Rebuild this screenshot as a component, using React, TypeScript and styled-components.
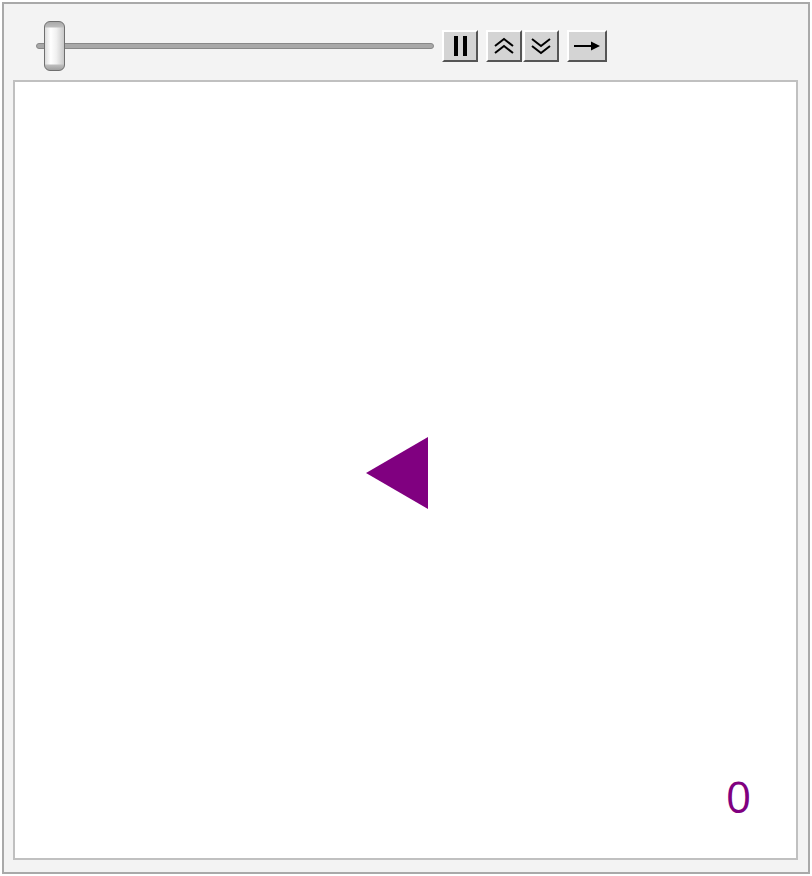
import React from "react";
import styled, { createGlobalStyle } from "styled-components";

const Global = createGlobalStyle`
  html, body { margin: 0; padding: 0; background: #ffffff; }
  body { font-family: "Open Sans", "DejaVu Sans", sans-serif; }
`;

const Frame = styled.div`
  box-sizing: border-box;
  margin: 2px 0 0 2px;
  width: 808px;
  height: 872px;
  border: 2px solid #a9a9a9;
  background: #f3f3f3;
  display: flex;
  flex-direction: column;
  padding: 0 10px 12px 9px;
`;

const Toolbar = styled.div`
  box-sizing: border-box;
  height: 76px;
  padding: 7px 0 0 23px;
  display: flex;
  align-items: center;
`;

const Slider = styled.div`
  position: relative;
  width: 398px;
  height: 50px;
  display: flex;
  align-items: center;
`;

const Track = styled.div`
  box-sizing: border-box;
  width: 100%;
  height: 6px;
  border-radius: 3px;
  background: #a8a8a8;
  border: 1px solid #888888;
`;

const Thumb = styled.div`
  position: absolute;
  left: 8px;
  top: 0;
  box-sizing: border-box;
  width: 21px;
  height: 50px;
  border: 1px solid #6f6f6f;
  border-radius: 6px;
  background: linear-gradient(
    to bottom,
    #a9a9a9 0px,
    #bdbdbd 5px,
    transparent 6px,
    transparent 42px,
    #bdbdbd 43px,
    #a0a0a0 100%
  ),
  linear-gradient(to right, #dcdcdc 0%, #ffffff 30%, #f0f0f0 60%, #c8c8c8 100%);
`;

const Button = styled.div<{ $gapLeft: number }>`
  box-sizing: border-box;
  margin-left: ${(p) => p.$gapLeft}px;
  width: 36px;
  height: 32px;
  background: #d4d4d4;
  border-top: 2px solid #ffffff;
  border-left: 2px solid #ffffff;
  border-right: 2px solid #555555;
  border-bottom: 2px solid #555555;
  display: flex;
  align-items: center;
  justify-content: center;
`;

const WideButton = styled(Button)`
  width: 40px;
`;

const Panel = styled.div`
  position: relative;
  flex: 1;
  box-sizing: border-box;
  border: 2px solid #c0c0c0;
  background: #ffffff;
`;

const Pointer = styled.svg`
  position: absolute;
  left: 351px;
  top: 355px;
`;

const Counter = styled.span`
  position: absolute;
  left: 711px;
  top: 692px;
  font-family: "Open Sans", sans-serif;
  font-size: 44px;
  line-height: 1;
  color: #800080;
`;

export default function App() {
  return (
    <>
      <Global />
      <Frame>
        <Toolbar>
          <Slider>
            <Track />
            <Thumb />
          </Slider>
          <Button $gapLeft={8}>
            <svg width="16" height="20" viewBox="0 0 16 20">
              <rect x="2" y="0" width="4" height="20" fill="#000" />
              <rect x="11" y="0" width="4" height="20" fill="#000" />
            </svg>
          </Button>
          <Button $gapLeft={8}>
            <svg width="22" height="18" viewBox="0 0 22 18">
              <polyline points="2,9 11,2 20,9" fill="none" stroke="#000" strokeWidth="2" />
              <polyline points="2,16 11,9 20,16" fill="none" stroke="#000" strokeWidth="2" />
            </svg>
          </Button>
          <Button $gapLeft={1}>
            <svg width="22" height="18" viewBox="0 0 22 18">
              <polyline points="2,2 11,9 20,2" fill="none" stroke="#000" strokeWidth="2" />
              <polyline points="2,9 11,16 20,9" fill="none" stroke="#000" strokeWidth="2" />
            </svg>
          </Button>
          <WideButton $gapLeft={8}>
            <svg width="28" height="12" viewBox="0 0 28 12">
              <line x1="1" y1="6" x2="20" y2="6" stroke="#000" strokeWidth="2" />
              <polygon points="18,1.5 27,6 18,10.5" fill="#000" />
            </svg>
          </WideButton>
        </Toolbar>
        <Panel>
          <Pointer width="62" height="72" viewBox="0 0 62 72">
            <polygon points="0,36 62,0 62,72" fill="#800080" />
          </Pointer>
          <Counter>0</Counter>
        </Panel>
      </Frame>
    </>
  );
}
